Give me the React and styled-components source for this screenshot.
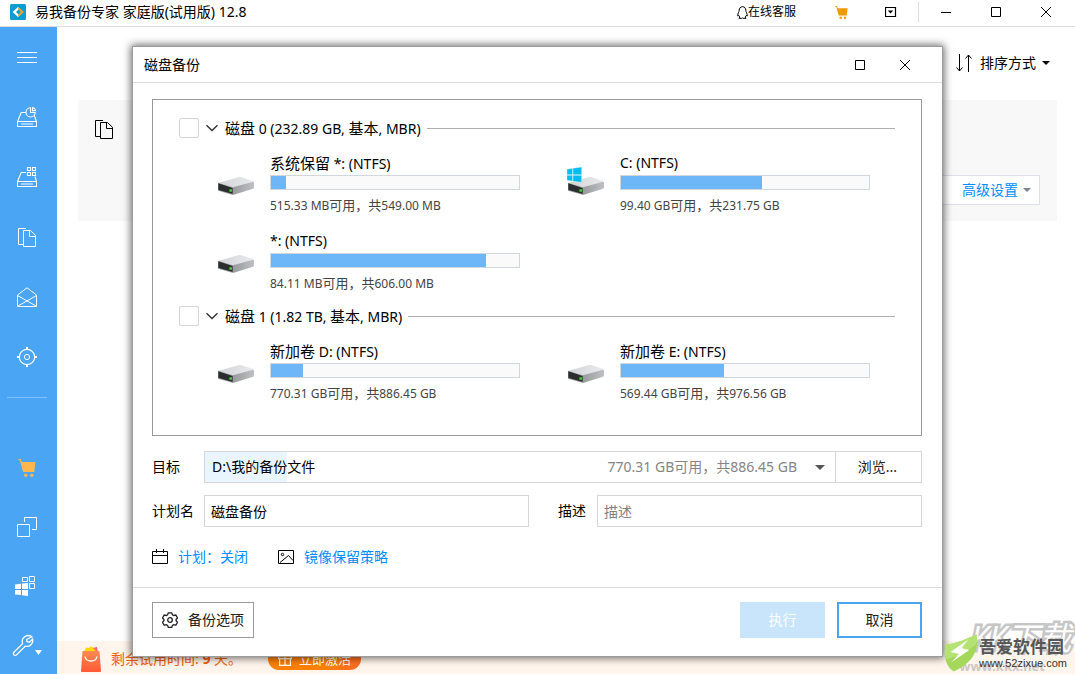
import React, { useState } from "react";
import styled, { createGlobalStyle, css } from "styled-components";

const GlobalStyle = createGlobalStyle`
  *, *::before, *::after { box-sizing: border-box; }
  body {
    margin: 0;
    background: #fff;
    color: #000;
    font: 14px/20px "Noto Sans", "Noto Sans CJK SC", sans-serif;
  }
  button, input, select { font: inherit; color: inherit; margin: 0; }
  svg { display: block; flex: none; }
`;

const blue = "#4aa5f5";
const linkBlue = "#008dff";

/* ---------- icons ---------- */

const Icon = ({ w = 20, h = 20, box, children, stroke = "currentColor", sw = 1, fill = "none" }) => (
  <svg width={w} height={h} viewBox={box || `0 0 ${w} ${h}`} fill={fill} stroke={stroke} strokeWidth={sw} aria-hidden="true">
    {children}
  </svg>
);

const LogoIcon = () => (
  <Icon w={16} h={16} stroke="none">
    <rect width="16" height="16" rx="1.5" fill="#0a9fd0" />
    <path d="M8 3 2.6 8 8 13l1.6-1.6L6 8l3.6-3.4z" fill="#fff" />
    <path d="M9 3.4 13.8 8 9 12.6 7.8 11.4 10.8 8 7.8 4.8z" fill="#f5a31c" />
  </Icon>
);
const MenuIcon = () => (
  <Icon>
    <path d="M0 5.5h20M0 10.5h20M0 15.5h20" />
  </Icon>
);
const DiskPieIcon = () => (
  <Icon sw={1.1}>
    <path d="M9 5.5H4.2L.5 14.5v5h19v-5L17 7.5M.5 14.5h19M4 17h12" />
    <path d="M13.5.8a4.6 4.6 0 1 0 4.7 4.7h-4.7zM15.5.6v3h3.2A4 4 0 0 0 15.5.6z" />
  </Icon>
);
const DiskGridIcon = () => (
  <Icon sw={1.1}>
    <path d="M9 5.5H4.2L.5 14.5v5h19v-5L18 9.5M.5 14.5h19M4 17h12" />
    <path d="M10.5.5h3v3h-3zM15.5.5h3v3h-3zM10.5 5.5h3v3h-3zM15.5 5.5h3v3h-3z" />
  </Icon>
);
const CopyIcon = () => (
  <Icon>
    <path d="M6 17.5H1.5V1.5h7.5" />
    <path d="M6.5 3.5h7l5 4.8v11.2h-12zM12.5 3.5v6h6" />
  </Icon>
);
const MailIcon = () => (
  <Icon>
    <path d="M.5 8 10 .8 19.5 8v11.5H.5zM.5 8.5 19 19M19.5 8.5 1 19" />
  </Icon>
);
const TargetIcon = () => (
  <Icon>
    <circle cx="10" cy="10" r="7.7" strokeWidth="1.2" />
    <circle cx="10" cy="10" r="2.6" />
    <path strokeWidth="2" d="M10 0v3M10 17v3M0 10h3M17 10h3" />
  </Icon>
);
const CartIcon = ({ w = 18, h = 18, color = "#ffb74d" }) => (
  <Icon w={w} h={h} box="0 0 18 18" stroke="none" fill={color}>
    <path d="M.5 0h2.2l1.1 3H17.5l-1.3 10H5L1.9 1.3H.5z" />
    <circle cx="7.8" cy="16.3" r="1.7" />
    <circle cx="13.8" cy="16.3" r="1.7" />
  </Icon>
);
const SquaresIcon = () => (
  <Icon>
    <path d="M.5 7.5h12v12H.5zM7.5 5V.5h12v12H15" />
  </Icon>
);
const TilesIcon = () => (
  <Icon w={24} h={20} stroke="none" fill="#fff">
    <path d="M0 8.5l6-.7V13H0zM7 7.6l6-.6v6H7zM0 14h6v5l-6-.5zM7 14h6v6l-6-.7z" />
    <path fill="none" stroke="#fff" d="M7.5 1.5h5v4h-5zM14.5.5h5v5h-5zM14.5 7.5h5v5h-5z" />
  </Icon>
);
const WrenchIcon = () => (
  <Icon w={30} h={24} sw={1.3}>
    <path d="M18.8 1.8A6 6 0 0 0 9.6 8.6L.9 17.3a1.8 1.8 0 0 0 0 2.6 1.8 1.8 0 0 0 2.6 0l8.7-8.7A6 6 0 0 0 19.6 4l-3.2 3.3-2.3-.6-.5-2.2z" transform="translate(1 2)" />
    <path d="M23 17h7l-3.500 5z" fill="#fff" stroke="none" />
  </Icon>
);
const PenguinIcon = () => (
  <Icon w={11} h={13}>
    <path d="M5.5.7c2.2 0 3.3 1.6 3.3 3.6 0 1.7 1.6 3 1.5 5.6l-1.1-.4-1 1.6.8 1.2H6.2L5.500 12l-.7.3H2l.8-1.200-1-1.600-1.100.4C.6 7.300 2.200 6 2.200 4.300c0-2 1.100-3.600 3.300-3.600z" />
  </Icon>
);
const TrayIcon = () => (
  <Icon w={12} h={10}>
    <path d="M.5.5h10v9H.5z" strokeWidth="1.2" />
    <path d="M2.8 3.5h5.4L5.5 6.5z" fill="currentColor" stroke="none" />
  </Icon>
);
const MinIcon = () => <Icon w={10} h={10}><path d="M0 5.5h10" /></Icon>;
const MaxIcon = () => <Icon w={10} h={10}><path d="M.5.5h9v9h-9z" /></Icon>;
const CloseIcon = () => <Icon w={10} h={10}><path d="M0 0l10 10M10 0L0 10" /></Icon>;
const Caret = ({ w = 8, h = 4, color = "#000" }) => (
  <Icon w={w} h={h} box="0 0 8 4" stroke="none" fill={color}><path d="M0 0h8L4 4z" /></Icon>
);
const SortIcon = () => (
  <Icon w={16} h={18}>
    <path d="M3.5 0v17M.5 13.5l3 3.5 3-3.5M12.5 18V1M9.5 4.5l3-3.5 3 3.5" />
  </Icon>
);
const ChevronIcon = () => (
  <Icon w={12} h={8} sw={1.4} stroke="#333"><path d="M.5 1.2 6 6.5l5.5-5.3" /></Icon>
);
const CalendarIcon = () => (
  <Icon w={16} h={16}>
    <path d="M.5 2.5h15v12H.5zM.5 6.5h15M4.5 0v4M11.5 0v4" />
  </Icon>
);
const ImageIcon = () => (
  <Icon w={16} h={16}>
    <path d="M.5 1.5h15v13H.5zM2 13.5l8.5-7 4.5 5" />
    <circle cx="4.5" cy="5.5" r="1.2" />
  </Icon>
);
const GearIcon = () => (
  <Icon w={16} h={16} sw={1.3} stroke="#222">
    <path d="M6.3.8h3.4l.7 2 1.3.7 2.1-.5 1.7 3-1.4 1.5v1.2l1.4 1.5-1.7 3-2.1-.5-1.3.7-.7 2H6.3l-.7-2-1.3-.7-2.1.5-1.7-3 1.4-1.5V7.5L.5 6l1.7-3 2.1.5 1.3-.7z" />
    <circle cx="8" cy="8" r="2.3" />
  </Icon>
);
const GiftIcon = () => (
  <Icon w={14} h={14} sw={1.2}>
    <path d="M.6 3.6h12.8v3H.6zM1.6 6.6v6.8h10.8V6.6M7 3.6v9.8M7 3.6 4 .6M7 3.6l3-3" />
  </Icon>
);
const BagIcon = () => (
  <Icon w={20} h={26} stroke="none">
    <defs>
      <linearGradient id="bag" x1="0" y1="0" x2="0" y2="1">
        <stop offset="0" stopColor="#f98a52" />
        <stop offset="1" stopColor="#ff5a36" />
      </linearGradient>
    </defs>
    <path d="M11 2l5-1 1 6h-6z" fill="#f5627a" />
    <path d="M3 6 5 1.5 8 2l2-2 5 5v3H3z" fill="#ffd800" />
    <path d="M1.5 5h17L20 25a1 1 0 0 1-1 1H1a1 1 0 0 1-1-1z" fill="url(#bag)" />
    <path d="M4 10.5c1 6 11 6 12 0" fill="none" stroke="#fff" strokeWidth="1.4" />
  </Icon>
);
const DriveIcon = ({ system }) => (
  <Icon w={38} h={29} box="0 0 114 87" stroke="none">
    <defs>
      <linearGradient id="driveTop" x1="0" y1="0" x2="1" y2="0">
        <stop offset="0" stopColor="#d2d3d6" />
        <stop offset="1" stopColor="#e9eaec" />
      </linearGradient>
      <linearGradient id="driveSide" x1="0" y1="0" x2="1" y2="0">
        <stop offset="0" stopColor="#989a9d" />
        <stop offset="1" stopColor="#bfc0c3" />
      </linearGradient>
    </defs>
    <path d="M3 48 66 30q4-1 8 1l35 11v3L48 64z" fill="url(#driveTop)" />
    <path d="M48 61l60-17q3 0 3 3v14q0 3-3 4L48 84z" fill="url(#driveSide)" />
    <path d="M3 47l45 14v23L3 71z" fill="#a5a6a8" />
    <path d="M4 49l43 14v18L4 69z" fill="#2c2d2f" />
    <rect x="37" y="67" width="8" height="7" fill="#3adb2f" />
    {system && (
      <path fill="#00bcf2" stroke="#fff" strokeWidth="1" d="M0 6l17-3v19H0zM18 3l26-4v23H18zM0 24h17v18L0 39zM18 24h26v21l-26-3z" transform="translate(0 1)" />
    )}
  </Icon>
);

/* ---------- window frame ---------- */

const Window = styled.div`
  display: flex;
  flex-direction: column;
  min-height: 100vh;
`;

const TitleBar = styled.header`
  display: flex;
  align-items: center;
  height: 27px;
  padding: 0 4px 2px 10px;
  border-bottom: 1px solid #dcdcdc;
`;

const AppTitle = styled.h1`
  margin: 0 auto 0 9px;
  font-size: 14px;
  font-weight: 400;
  white-space: nowrap;
`;

const SupportLink = styled.a`
  display: flex;
  align-items: center;
  margin-right: 20px;
  font-size: 12px;
  color: #000;
  text-decoration: none;
`;

const FrameButton = styled.button`
  display: flex;
  align-items: center;
  justify-content: center;
  width: ${(p) => p.$width || 50}px;
  height: 24px;
  padding: 0;
  border: 0;
  background: none;
`;

const FrameDivider = styled.span`
  width: 1px;
  height: 20px;
  margin: 0 2px;
  background: #dcdcdc;
`;

const Body = styled.div`
  position: relative;
  display: flex;
  flex: 1;
`;

/* ---------- sidebar ---------- */

const Sidebar = styled.nav`
  display: flex;
  flex-direction: column;
  width: 57px;
  padding-right: 3px;
  background: ${blue};
  color: #fff;
`;

const NavButton = styled.button`
  display: flex;
  align-items: center;
  justify-content: center;
  height: ${(p) => (p.$compact ? 59 : 60)}px;
  padding: 0;
  border: 0;
  background: none;
  color: #fff;
`;

const NavDivider = styled.hr`
  width: 40px;
  height: 1px;
  margin: 10px auto;
  margin-left: 7px;
  border: 0;
  background: #80c0f8;
`;

const NavTail = styled.div`
  display: flex;
  flex-direction: column;
  margin-top: auto;
`;

/* ---------- page behind the dialog ---------- */

const Main = styled.main`
  display: flex;
  flex: 1;
  flex-direction: column;
`;

const SortBar = styled.div`
  display: flex;
  justify-content: flex-end;
  padding: 26px 25px 27px;
`;

const SortButton = styled.button`
  display: flex;
  align-items: center;
  padding: 0;
  border: 0;
  background: none;
  span { margin: 0 6px 0 8px; }
`;

const PlanCard = styled.section`
  display: flex;
  align-items: flex-start;
  justify-content: space-between;
  height: 121px;
  margin: 0 18px 0 21px;
  padding: 19px 17px 0 16px;
  background: #f8f8f8;
`;

const AdvancedButton = styled.button`
  display: flex;
  align-items: center;
  justify-content: flex-end;
  gap: 5px;
  width: 120px;
  height: 30px;
  margin-top: 56px;
  padding: 0 8px;
  border: 1px solid #dde0ea;
  background: #fff;
  color: ${linkBlue};
`;

const TrialBar = styled.footer`
  display: flex;
  align-items: center;
  height: 33px;
  margin-top: auto;
  padding: 3px 24px 0;
  background: #fff5ec;
  color: #f06000;
  p { margin: 0 26px 0 10px; white-space: pre; }
`;

const ActivateButton = styled.button`
  display: flex;
  align-items: center;
  gap: 7px;
  height: 22px;
  padding: 0 10px;
  border: 0;
  border-radius: 11px;
  background: linear-gradient(100deg, #fd8000 70%, #fd7020 85%);
  color: #fff;
  font-size: 13px;
`;

/* ---------- dialog ---------- */

const Overlay = styled.div`
  position: absolute;
  inset: 0;
  display: flex;
  align-items: center;
  padding: 2px 132px 0;
`;

const Dialog = styled.section`
  flex: 1;
  border: 1px solid #9c9c9c;
  background: #fff;
  box-shadow: 0 0 8px 1px rgba(0, 0, 0, 0.6);
`;

const DialogHeader = styled.header`
  display: flex;
  align-items: center;
  height: 36px;
  padding: 0 15px 0 11px;
  border-bottom: 1px solid #dcdcdc;
  h2 { margin: 0 auto 0 0; font-size: 14px; font-weight: 400; }
`;

const DialogBody = styled.div`
  padding: 16px 20px 20px 19px;
`;

const DiskPanel = styled.div`
  min-height: 337px;
  padding: 18px 0 32px;
  border: 1px solid #999;
`;

const DiskGroup = styled.section`
  & + & { margin-top: 13px; }
`;

const DiskHeader = styled.div`
  display: flex;
  align-items: center;
  height: 20px;
  margin: 0 26px 14px;
  label { margin-left: 7px; }
  &::after {
    content: "";
    flex: 1;
    height: 1px;
    margin-left: 6px;
    background: #b0b0b0;
  }
`;

const Check = styled.input`
  appearance: none;
  width: 20px;
  height: 20px;
  margin: 0;
  border: 1px solid #d4d4d4;
  border-radius: 2px;
  background: #fff;
  &:checked { background: ${blue}; }
`;

const ExpandButton = styled.button`
  display: flex;
  margin-left: 7px;
  padding: 0;
  border: 0;
  background: none;
`;

const Volumes = styled.div`
  display: grid;
  grid-template-columns: repeat(auto-fill, 350px);
  row-gap: 15px;
  padding-left: 64px;
`;

const Volume = styled.div`
  display: flex;
  gap: 15px;
  svg { margin-top: 15px; }
`;

const VolumeText = styled.div`
  width: 250px;
`;

const VolumeName = styled.div`
  height: 23px;
  line-height: 22px;
`;

const UsageTrack = styled.div`
  height: 15px;
  border: 1px solid #d2d6de;
  background: #fafafa;
`;

const UsageFill = styled.div`
  height: 100%;
  background: #6db7f8;
`;

const VolumeSpace = styled.div`
  height: 20px;
  margin-top: 5px;
  font-size: 12px;
  color: #444;
`;

/* Chinese runs are set one pixel larger than the Latin text around them. */
const HanRun = styled.span`
  font-size: ${(p) => p.$size}px;
`;

const Mixed = ({ size, children }) =>
  children
    .split(/([\u3000-\u9fff\uff00-\uffef]+)/)
    .filter(Boolean)
    .map((run, i) =>
      /[\u3000-\u9fff\uff00-\uffef]/.test(run) ? <HanRun key={i} $size={size}>{run}</HanRun> : run
    );

const FormRow = styled.div`
  display: flex;
  align-items: center;
  margin-top: ${(p) => p.$gap}px;
`;

const FieldLabel = styled.label`
  flex: none;
  width: ${(p) => p.$width}px;
  padding-left: ${(p) => p.$indent || 0}px;
`;

const boxed = css`
  height: 32px;
  border: 1px solid #d6d6d6;
  border-radius: 0;
  background: #fff;
`;

const TextField = styled.input`
  ${boxed}
  flex: 1;
  min-width: 0;
  padding: 0 6px;
  outline: 0;
  &::placeholder { color: #808080; opacity: 1; }
`;

const TargetBox = styled.div`
  ${boxed}
  display: grid;
  flex: 1;
  align-items: center;
  > * { grid-area: 1 / 1; }
`;

const TargetSelect = styled.select`
  appearance: none;
  width: 100%;
  height: 30px;
  padding: 0 7px;
  border: 0;
  border-radius: 0;
  background: linear-gradient(to right, #e9f6ff 13%, #fff 13%);
`;

const TargetSpace = styled.span`
  display: flex;
  align-items: center;
  justify-self: end;
  gap: 18px;
  padding-right: 10px;
  color: #858585;
  pointer-events: none;
`;

const BrowseButton = styled.button`
  ${boxed}
  width: 86px;
  padding: 0 2px 0 0;
  border-left: 0;
  color: #222;
`;

const OptionLinks = styled.div`
  display: flex;
  align-items: center;
  gap: 30px;
  margin-top: 20px;
`;

const OptionLink = styled.a`
  display: flex;
  align-items: center;
  gap: 10px;
  color: ${linkBlue};
  text-decoration: none;
  svg { color: #000; }
`;

const DialogFooter = styled.footer`
  display: flex;
  gap: 12px;
  padding: 14px 20px 18px 19px;
  border-top: 1px solid #dcdcdc;
`;

const looks = {
  outline: css`border: 1px solid #999; background: #fff; color: #222;`,
  disabled: css`border: 0; background: #c9e5fc; color: #fff;`,
  focus: css`border: 2px solid ${blue}; background: #fff; color: #222;`,
};

const ActionButton = styled.button`
  display: flex;
  align-items: center;
  justify-content: center;
  gap: 10px;
  width: ${(p) => (p.$look === "outline" ? 102 : 85)}px;
  height: 36px;
  margin-right: ${(p) => (p.$look === "outline" ? "auto" : 0)};
  padding: 0;
  ${(p) => looks[p.$look]}
`;

/* ---------- site marks ---------- */

const SiteMark = styled.aside`
  position: absolute;
  right: 8px;
  bottom: 2px;
  display: flex;
  align-items: center;
  color: #555;
  div { font: 700 17px/20px "Noto Sans CJK SC", sans-serif; }
  small { display: block; font: 400 11px/14px "Liberation Sans", sans-serif; color: #333; }
`;

const GreyMark = styled.aside`
  position: absolute;
  right: 4px;
  bottom: 0;
  text-align: right;
  div {
    font: italic 400 32px/40px "Noto Sans", "Noto Sans CJK SC", sans-serif;
    color: #fff;
    -webkit-text-stroke: 5px #c6c6c6;
    paint-order: stroke fill;
    stroke-linejoin: round;
  }
  small {
    display: block;
    padding-right: 26px;
    font: 700 13px/16px "Noto Sans", sans-serif;
    color: #cdc8c4;
  }
`;

const LeafIcon = () => (
  <Icon w={35} h={38} box="0 0 108 114" stroke="none">
    <path d="M4 32C36 28 70 14 100 0c12 48-16 92-70 114C6 98-2 68 4 32z" fill="#a3d85a" />
    <path d="M4 32C36 28 70 14 100 0c2 10 3 18 1 28C74 54 38 70 6 76 2 62 2 48 4 32z" fill="#b4e274" />
    <path d="M74 16 20 54l26 6-24 26 56-38-24-6z" fill="#fff" />
  </Icon>
);

/* ---------- data ---------- */

const disks = [
  {
    id: "disk0",
    label: "磁盘 0 (232.89 GB, 基本, MBR)",
    volumes: [
      { name: "系统保留 *: (NTFS)", space: "515.33 MB可用，共549.00 MB", used: 6 },
      { name: "C: (NTFS)", space: "99.40 GB可用，共231.75 GB", used: 57, system: true },
      { name: "*: (NTFS)", space: "84.11 MB可用，共606.00 MB", used: 86.5 },
    ],
  },
  {
    id: "disk1",
    label: "磁盘 1 (1.82 TB, 基本, MBR)",
    volumes: [
      { name: "新加卷 D: (NTFS)", space: "770.31 GB可用，共886.45 GB", used: 13 },
      { name: "新加卷 E: (NTFS)", space: "569.44 GB可用，共976.56 GB", used: 41.7 },
    ],
  },
];

const topNav = [
  ["菜单", MenuIcon],
  ["磁盘备份", DiskPieIcon],
  ["系统备份", DiskGridIcon],
  ["文件备份", CopyIcon],
  ["邮件备份", MailIcon],
  ["智能备份", TargetIcon],
];
const tailNav = [
  ["购买", CartIcon],
  ["克隆", SquaresIcon],
  ["系统克隆", TilesIcon],
  ["工具", WrenchIcon],
];

export default function App() {
  const [name, setName] = useState("磁盘备份");
  return (
    <>
      <GlobalStyle />
      <Window>
        <TitleBar>
          <LogoIcon />
          <AppTitle>易我备份专家 家庭版(试用版) 12.8</AppTitle>
          <SupportLink href="#support"><PenguinIcon />在线客服</SupportLink>
          <FrameButton aria-label="购买"><CartIcon w={13} h={13} color="#f09a00" /></FrameButton>
          <FrameButton aria-label="更多"><TrayIcon /></FrameButton>
          <FrameDivider />
          <FrameButton aria-label="最小化"><MinIcon /></FrameButton>
          <FrameButton aria-label="最大化"><MaxIcon /></FrameButton>
          <FrameButton aria-label="关闭"><CloseIcon /></FrameButton>
        </TitleBar>
        <Body>
          <Sidebar>
            {topNav.map(([label, Glyph]) => (
              <NavButton key={label} aria-label={label}><Glyph /></NavButton>
            ))}
            <NavDivider />
            <NavTail>
              {tailNav.map(([label, Glyph]) => (
                <NavButton key={label} aria-label={label} $compact><Glyph /></NavButton>
              ))}
            </NavTail>
          </Sidebar>
          <Main>
            <SortBar>
              <SortButton><SortIcon /><span>排序方式</span><Caret /></SortButton>
            </SortBar>
            <PlanCard>
              <CopyIcon />
              <AdvancedButton>高级设置<Caret color="#7d8590" /></AdvancedButton>
            </PlanCard>
            <TrialBar>
              <BagIcon />
              <p>剩余试用时间: <b>9</b> 天。</p>
              <ActivateButton><GiftIcon />立即激活</ActivateButton>
            </TrialBar>
          </Main>
          <Overlay>
            <Dialog role="dialog" aria-labelledby="dialog-title">
              <DialogHeader>
                <h2 id="dialog-title">磁盘备份</h2>
                <FrameButton $width={45} aria-label="最大化"><MaxIcon /></FrameButton>
                <FrameButton $width={45} aria-label="关闭"><CloseIcon /></FrameButton>
              </DialogHeader>
              <DialogBody>
                <DiskPanel>
                  {disks.map((disk) => (
                    <DiskGroup key={disk.id}>
                      <DiskHeader>
                        <Check type="checkbox" id={disk.id} />
                        <ExpandButton aria-label="展开"><ChevronIcon /></ExpandButton>
                        <label htmlFor={disk.id}><Mixed size={15}>{disk.label}</Mixed></label>
                      </DiskHeader>
                      <Volumes>
                        {disk.volumes.map((v) => (
                          <Volume key={v.name}>
                            <DriveIcon system={v.system} />
                            <VolumeText>
                              <VolumeName><Mixed size={15}>{v.name}</Mixed></VolumeName>
                              <UsageTrack><UsageFill style={{ width: `${v.used}%` }} /></UsageTrack>
                              <VolumeSpace><Mixed size={13}>{v.space}</Mixed></VolumeSpace>
                            </VolumeText>
                          </Volume>
                        ))}
                      </Volumes>
                    </DiskGroup>
                  ))}
                </DiskPanel>
                <FormRow $gap={15}>
                  <FieldLabel $width={52} htmlFor="target">目标</FieldLabel>
                  <TargetBox>
                    <TargetSelect id="target"><option>D:\我的备份文件</option></TargetSelect>
                    <TargetSpace>770.31 GB可用，共886.45 GB<Caret w={10} h={5} color="#555" /></TargetSpace>
                  </TargetBox>
                  <BrowseButton>浏览...</BrowseButton>
                </FormRow>
                <FormRow $gap={12}>
                  <FieldLabel $width={52} htmlFor="plan">计划名</FieldLabel>
                  <TextField id="plan" value={name} onChange={(e) => setName(e.target.value)} />
                  <FieldLabel $width={68} $indent={29} htmlFor="desc">描述</FieldLabel>
                  <TextField id="desc" placeholder="描述" />
                </FormRow>
                <OptionLinks>
                  <OptionLink href="#schedule"><CalendarIcon />计划：关闭</OptionLink>
                  <OptionLink href="#retention"><ImageIcon />镜像保留策略</OptionLink>
                </OptionLinks>
              </DialogBody>
              <DialogFooter>
                <ActionButton $look="outline"><GearIcon />备份选项</ActionButton>
                <ActionButton $look="disabled" disabled>执行</ActionButton>
                <ActionButton $look="focus">取消</ActionButton>
              </DialogFooter>
            </Dialog>
          </Overlay>
          <GreyMark>
            <div>KK下载</div>
            <small>www.kkx.net</small>
          </GreyMark>
          <SiteMark>
            <LeafIcon />
            <span>
              <div>吾爱软件园</div>
              <small>www.52zixue.com</small>
            </span>
          </SiteMark>
        </Body>
      </Window>
    </>
  );
}
